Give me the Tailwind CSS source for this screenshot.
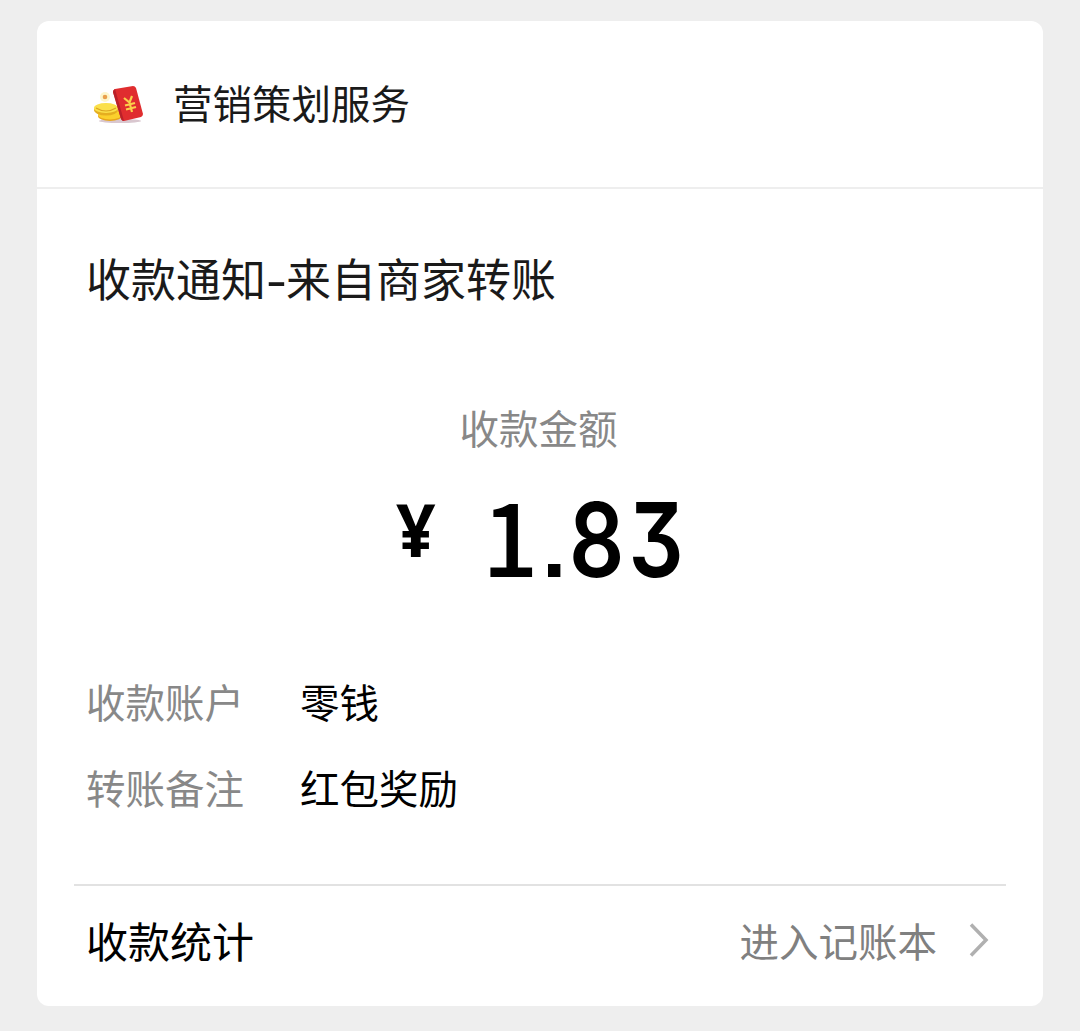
<!DOCTYPE html>
<html lang="zh-CN">
<head>
  <meta charset="UTF-8" />
  <meta name="viewport" content="width=device-width, initial-scale=1.0"/>
  <title>收款通知</title>
  <script src="https://cdn.jsdelivr.net/npm/@tailwindcss/browser@4"></script>
</head>
<body class="bg-[#eeeeee] h-[1031px] overflow-hidden pt-[21px] pl-[37px] font-['Noto_Sans_CJK_SC',sans-serif] text-[#1a1a1a]">
  <div class="w-[1006px] h-[985px] bg-white rounded-xl">
    <!-- Merchant -->
    <div class="h-[168px] border-b-2 border-[#eeeeee] flex items-center pl-[56px]">
      <svg class="mt-0.5 w-[52px] h-[42px]" viewBox="0 0 52 42">
        <ellipse cx="27" cy="37" rx="21" ry="2" fill="#d9c7cf"/>
        <!-- Coins -->
        <ellipse cx="17" cy="32" rx="12" ry="5" fill="#e8a51c"/>
        <ellipse cx="17" cy="30.500" rx="12" ry="5" fill="#fbd02c"/>
        <ellipse cx="13" cy="26" rx="12" ry="5.500" fill="#e5ae20"/>
        <ellipse cx="13" cy="24" rx="12" ry="5" fill="#fbe04a"/>
        <path d="M3 24 Q13 30 23 24" fill="none" stroke="#dba422" stroke-width="1.200"/>
        <circle cx="12" cy="13" r="5" fill="#fdf6cc"/>
        <circle cx="12" cy="13" r="2.300" fill="#e9a04c"/>
        <!-- Red packet -->
        <path d="M22 5 L40 2 Q42 2 43 4 L50 30 Q50 32 48 33 L31 37 Q29 37 28 35 L20 8 Q20 6 22 5 Z" fill="#e02d2f"/>
        <path d="M20 8 L28 35 Q29 37 31 37 L22 5 Q20 6 20 8 Z" fill="#b9202a"/>
        <path d="M31 14 L36.500 18.500 L39 12 M36.500 18.500 L39 28 M32 21.500 L42 19 M33 25.500 L43 23" fill="none" stroke="#fbd04a" stroke-width="2.200"/>
      </svg>
      <span class="ml-[28px] -mt-1 text-[39.5px] leading-none">营销策划服务</span>
    </div>

    <div class="px-[50px]">
      <h1 class="-ml-px pt-[66px] text-[45px] leading-none">收款通知<span class="inline-block w-[20px] origin-left scale-x-130 font-medium">-</span>来自商家转账</h1>
      <p class="mt-[107px] pr-[3px] text-center text-[39.5px] leading-none text-[#888888]">收款金额</p>
      <div class="mt-[44px] h-[104px] flex pl-[309px] text-black leading-none">
        <span class="w-[86px] mt-px text-[73px] origin-left scale-x-95 font-['Noto_Sans',sans-serif] font-bold">¥</span>
        <div class="flex items-baseline -mt-[9px]">
          <span class="w-[60px] text-[99px] leading-[104px] font-medium">1</span>
          <span class="w-[27px] text-[88px] leading-[104px] font-['Liberation_Sans',sans-serif] font-bold">.</span>
          <span class="mt-px text-[103px] leading-[104px] tracking-[5px] origin-left scale-x-[.84] font-['Inter',sans-serif] font-semibold [font-feature-settings:'cv09']">83</span>
        </div>
      </div>
      <dl class="-ml-px mt-[86px] grid grid-cols-[214px_1fr] gap-y-[47px] text-[39.5px] leading-none">
        <dt class="text-[#888888]">收款账户</dt><dd class="text-black">零钱</dd>
        <dt class="text-[#888888]">转账备注</dt><dd class="text-black">红包奖励</dd>
      </dl>
    </div>

    <!-- Ledger link -->
    <div class="mx-[37px] mt-[77px] h-[111px] border-t-2 border-[#e2e2e2] pl-[12px] pr-[17px] flex items-center justify-between leading-none">
      <span class="text-[42px] text-black">收款统计</span>
      <a href="#" class="flex items-center text-[39.5px] text-[#808080]">
        进入记账本
        <svg class="ml-[32px] w-[20px] h-[34px]" viewBox="0 0 20 34" fill="none" stroke="#b0b0b0" stroke-width="3.500">
          <path d="M2 1.500 L17 17 L2 32.500"/>
        </svg>
      </a>
    </div>
  </div>
</body>
</html>
